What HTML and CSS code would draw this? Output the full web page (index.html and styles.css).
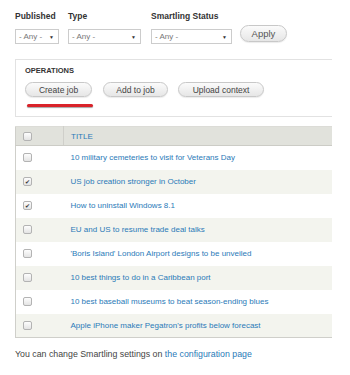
FILE: index.html
```html
<!DOCTYPE html>
<html>
<head>
<meta charset="utf-8">
<link rel="stylesheet" href="styles.css">
</head>
<body>
<div class="page">
  <div class="filters">
    <div class="filter">
      <div class="flabel">Published</div>
      <div class="select w-pub"><span>- Any -</span><span class="arrow">▼</span></div>
    </div>
    <div class="filter">
      <div class="flabel">Type</div>
      <div class="select w-type"><span>- Any -</span><span class="arrow">▼</span></div>
    </div>
    <div class="filter">
      <div class="flabel">Smartling Status</div>
      <div class="select w-status"><span>- Any -</span><span class="arrow">▼</span></div>
    </div>
    <div class="filter apply-wrap">
      <button class="btn apply">Apply</button>
    </div>
  </div>

  <div class="operations">
    <div class="ops-title">OPERATIONS</div>
    <div class="ops-buttons">
      <div class="create-wrap">
        <button class="btn op create">Create job</button>
        <div class="redline"></div>
      </div>
      <button class="btn op add">Add to job</button>
      <button class="btn op upload">Upload context</button>
    </div>
  </div>

  <table class="grid">
    <thead>
      <tr><th class="cb"><span class="check"></span></th><th class="title">TITLE</th></tr>
    </thead>
    <tbody>
      <tr><td class="cb"><span class="check"></span></td><td><a href="#">10 military cemeteries to visit for Veterans Day</a></td></tr>
      <tr class="even"><td class="cb"><span class="check on">✔</span></td><td><a href="#">US job creation stronger in October</a></td></tr>
      <tr><td class="cb"><span class="check on">✔</span></td><td><a href="#">How to uninstall Windows 8.1</a></td></tr>
      <tr class="even"><td class="cb"><span class="check"></span></td><td><a href="#">EU and US to resume trade deal talks</a></td></tr>
      <tr><td class="cb"><span class="check"></span></td><td><a href="#">'Boris Island' London Airport designs to be unveiled</a></td></tr>
      <tr class="even"><td class="cb"><span class="check"></span></td><td><a href="#">10 best things to do in a Caribbean port</a></td></tr>
      <tr><td class="cb"><span class="check"></span></td><td><a href="#">10 best baseball museums to beat season-ending blues</a></td></tr>
      <tr class="even"><td class="cb"><span class="check"></span></td><td><a href="#">Apple iPhone maker Pegatron's profits below forecast</a></td></tr>
    </tbody>
  </table>

  <p class="footer">You can change Smartling settings on <a href="#">the configuration page</a></p>
</div>
</body>
</html>
```

FILE: styles.css
```css
* { box-sizing: border-box; }
html, body { margin: 0; padding: 0; background: #fff; }
body {
  font-family: "Liberation Sans", Arial, sans-serif;
  color: #333;
  font-size: 8.5px;
}
.page { padding: 11px 18px 0 15px; width: 350px; }

.filters { display: flex; align-items: flex-end; }
.filter { display: flex; flex-direction: column; margin-right: 9px; }
.flabel { font-weight: bold; font-size: 8.5px; line-height: 10px; height: 10px; margin-bottom: 8px; color: #333; }
.select {
  height: 15px;
  border: 1px solid #ccc;
  background: #fff;
  display: flex;
  align-items: center;
  justify-content: space-between;
  padding: 0 4px 0 3px;
  font-size: 8px;
  color: #777;
}
.select .arrow { font-size: 5px; color: #333; }
.w-pub { width: 44px; }
.w-type { width: 73px; }
.w-status { width: 81px; }
.filter:nth-child(2) { margin-right: 10px; }
.filter:nth-child(3) { margin-right: 8px; }
.apply-wrap { margin-bottom: 2px; }

.btn {
  font-family: "Liberation Sans", Arial, sans-serif;
  color: #444;
  border: 1px solid #c8c8c8;
  border-radius: 10px;
  background: linear-gradient(#fbfbfb, #e6e6e6);
  box-shadow: 0 1px 1px rgba(0,0,0,0.08);
  padding: 0;
  cursor: pointer;
}
.apply { width: 47px; height: 17px; font-size: 9.5px; color: #555; }

.operations {
  margin-top: 15px;
  border: 1px solid #e2e2e2;
  border-right: none;
  width: 317px;
  height: 58px;
  padding: 6px 0 0 9px;
}
.ops-title { font-weight: bold; font-size: 7.5px; line-height: 10px; color: #333; }
.ops-buttons { display: flex; margin-top: 6px; align-items: flex-start; }
.op { height: 15px; font-size: 8.5px; }
.create-wrap { position: relative; margin-right: 11px; }
.create { width: 67px; }
.add { width: 65px; margin-right: 10px; }
.upload { width: 86px; }
.redline {
  position: absolute;
  left: 2px;
  top: 22px;
  width: 66px;
  height: 3px;
  background: #d9232a;
  border-radius: 2px;
  box-shadow: 0 1px 1px rgba(0,0,0,0.35);
}

.grid {
  margin-top: 9px;
  border-collapse: collapse;
  width: 317px;
  border-left: 1px solid #cfcfca;
  border-bottom: 1px solid #cfcfca;
  border-top: 1px solid #dcdcd7;
  table-layout: fixed;
}
.grid th {
  background: #e1e2dc;
  height: 19px;
  text-align: left;
  font-weight: normal;
  border-bottom: 1px solid #ccccc6;
  padding: 0;
}
.grid th.title {
  color: #2a7ab8;
  font-size: 8px;
  padding-left: 7px;
  border-left: 1px solid #cfcfca;
}
.grid td { height: 24px; padding: 0; font-size: 8px; }
.grid td:nth-child(2) { padding-left: 7px; }
.grid .cb { width: 48px; padding-left: 7px; }
.grid tr.even td { background: #f3f4ee; }
.grid a { color: #2a7ab8; text-decoration: none; white-space: nowrap; }

.check {
  display: flex;
  align-items: center;
  justify-content: center;
  width: 9px;
  height: 9px;
  border: 1px solid #b3b3b3;
  border-radius: 2px;
  background: linear-gradient(#fdfdfd, #e4e4e4);
  font-size: 6px;
  line-height: 1;
  color: #333;
}

.footer { margin: 11px 0 0 0; font-size: 8.8px; color: #444; line-height: 10px; }
.footer a { color: #2a7ab8; text-decoration: none; }
```
